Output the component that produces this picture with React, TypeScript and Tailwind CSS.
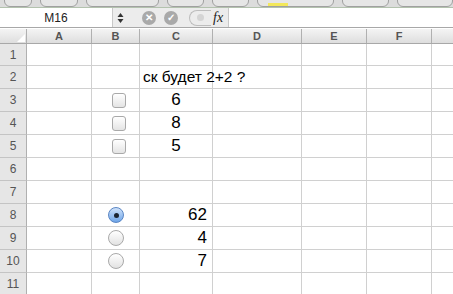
import React from "react";

const cols = [
  { name: "A", w: 65 },
  { name: "B", w: 48 },
  { name: "C", w: 73 },
  { name: "D", w: 89 },
  { name: "E", w: 65 },
  { name: "F", w: 65 },
  { name: "", w: 40 },
];

const font = { fontFamily: '"Liberation Sans", Arial, sans-serif' };

function Checkbox() {
  return (
    <div className="w-[14px] h-[15px] rounded-[3px] border border-[#a9a9a9] bg-gradient-to-b from-white to-[#e4e4e4]" />
  );
}

function Radio({ on }: { on?: boolean }) {
  if (on) {
    return (
      <div className="w-[16px] h-[16px] rounded-full border border-[#5a86c4] bg-gradient-to-b from-[#cfe2fa] to-[#6ea5e8] flex items-center justify-center">
        <div className="w-[5px] h-[5px] rounded-full bg-[#1b2431]" />
      </div>
    );
  }
  return (
    <div className="w-[16px] h-[16px] rounded-full border border-[#a9a9a9] bg-gradient-to-b from-white to-[#e2e2e2]" />
  );
}

type Cell = { c: number; node: React.ReactNode; align?: string };

const num = (v: string) => <span className="text-[17px] text-black">{v}</span>;

const rows: { h: number; cells: Cell[] }[] = [
  { h: 22, cells: [] },
  {
    h: 23,
    cells: [
      {
        c: 2,
        node: <span className="whitespace-nowrap text-[15.5px] text-black pl-[3px]">ск будет 2+2 ?</span>,
        align: "justify-start",
      },
    ],
  },
  { h: 23, cells: [{ c: 1, node: <Checkbox />, align: "justify-center pl-[6px]" }, { c: 2, node: num("6"), align: "justify-center" }] },
  { h: 23, cells: [{ c: 1, node: <Checkbox />, align: "justify-center pl-[6px]" }, { c: 2, node: num("8"), align: "justify-center" }] },
  { h: 23, cells: [{ c: 1, node: <Checkbox />, align: "justify-center pl-[6px]" }, { c: 2, node: num("5"), align: "justify-center" }] },
  { h: 23, cells: [] },
  { h: 23, cells: [] },
  { h: 23, cells: [{ c: 1, node: <Radio on />, align: "justify-center pl-[1px]" }, { c: 2, node: num("62"), align: "justify-end pr-[5px]" }] },
  { h: 23, cells: [{ c: 1, node: <Radio />, align: "justify-center pl-[1px]" }, { c: 2, node: num("4"), align: "justify-end pr-[5px]" }] },
  { h: 23, cells: [{ c: 1, node: <Radio />, align: "justify-center pl-[1px]" }, { c: 2, node: num("7"), align: "justify-end pr-[5px]" }] },
  { h: 23, cells: [] },
];

export default function App() {
  return (
    <div className="w-[453px] h-[294px] overflow-hidden bg-white" style={font}>
      {/* toolbar remnant */}
      <div className="h-[8px] bg-[#dcdcdc] flex items-end gap-[8px] pl-[4px] overflow-hidden border-b border-[#b3c2ae]">
        <div className="w-[30px] h-[14px] rounded-[6px] border border-[#a0a0a0] bg-[#e6e6e6]" />
        <div className="w-[40px] h-[14px] rounded-[6px] border border-[#a0a0a0] bg-[#e6e6e6]" />
        <div className="w-[78px] h-[14px] rounded-[6px] border border-[#a0a0a0] bg-[#e6e6e6]" />
        <div className="w-[40px] h-[14px] rounded-[6px] border border-[#a0a0a0] bg-[#e6e6e6]" />
        <div className="w-[40px] h-[14px] rounded-[6px] border border-[#a0a0a0] bg-[#e6e6e6]" />
        <div className="w-[82px] h-[14px] rounded-[6px] border border-[#a0a0a0] bg-[#e6e6e6] flex">
          <div className="w-[20px] ml-[10px] h-[3px] self-end bg-[#f3e85a]" />
        </div>
        <div className="w-[50px] h-[14px] rounded-[6px] border border-[#a0a0a0] bg-[#e6e6e6]" />
        <div className="w-[60px] h-[14px] rounded-[6px] border border-[#a0a0a0] bg-[#e6e6e6]" />
      </div>

      {/* formula bar */}
      <div className="h-[20px] flex bg-[#ececec] border-b border-[#a8a8a8]">
        <div className="w-[113px] bg-white flex items-center justify-center text-[12px] text-[#222] border-r border-[#c8c8c8]">
          M16
        </div>
        <div className="w-[15px] flex items-center justify-center">
          <svg width="7" height="12" viewBox="0 0 7 12">
            <path d="M3.5 1 L6.5 5 L0.5 5 Z" fill="#333" />
            <path d="M3.5 11 L6.5 7 L0.5 7 Z" fill="#333" />
          </svg>
        </div>
        <div className="flex items-center pl-[14px] gap-[8px]">
          <div className="w-[14px] h-[14px] rounded-full bg-[#a9a9a9] flex items-center justify-center text-white text-[10px] font-bold leading-none">
            ✕
          </div>
          <div className="w-[14px] h-[14px] rounded-full bg-[#a9a9a9] flex items-center justify-center text-white text-[10px] font-bold leading-none">
            ✓
          </div>
          <div className="ml-[3px] w-[22px] h-[16px] rounded-l-full border-l border-y border-[#bdbdbd] flex items-center justify-center">
            <div className="w-[7px] h-[7px] rounded-full bg-[#d4d4d4]" />
          </div>
          <span
            className="italic text-[14px] text-[#222] -ml-[6px]"
            style={{ fontFamily: '"Liberation Serif", "Times New Roman", serif' }}
          >
            fx
          </span>
        </div>
        <div className="flex-1 bg-white ml-[5px] border-l border-[#c8c8c8]" />
      </div>

      {/* column headers */}
      <div className="h-[15px] flex bg-gradient-to-b from-[#f4f4f4] to-[#dedede] border-b border-[#a8a8a8] mt-[1px]">
        <div className="w-[27px] shrink-0 border-r border-[#b0b0b0] flex items-end justify-end p-[1px]">
          <div className="w-0 h-0 border-l-[8px] border-l-transparent border-b-[8px] border-b-white" />
        </div>
        {cols.map((c, i) => (
          <div
            key={i}
            className="shrink-0 border-r border-[#b0b0b0] flex items-center justify-center text-[11px] font-bold text-[#555]"
            style={{ width: c.w }}
          >
            {c.name}
          </div>
        ))}
      </div>

      {/* rows */}
      {rows.map((r, ri) => (
        <div key={ri} className="flex border-b border-[#d0d0d0]" style={{ height: r.h }}>
          <div className="w-[27px] shrink-0 bg-[#e6e6e6] border-r border-[#b0b0b0] border-b border-b-[#c4c4c4] -mb-[1px] flex items-center justify-center text-[12px] text-[#555]">
            {ri + 1}
          </div>
          {cols.map((c, ci) => {
            const cell = r.cells.find((x) => x.c === ci);
            return (
              <div
                key={ci}
                className={`shrink-0 border-r border-[#d0d0d0] flex items-center overflow-visible ${cell?.align ?? ""}`}
                style={{ width: c.w }}
              >
                {cell?.node}
              </div>
            );
          })}
        </div>
      ))}
    </div>
  );
}
